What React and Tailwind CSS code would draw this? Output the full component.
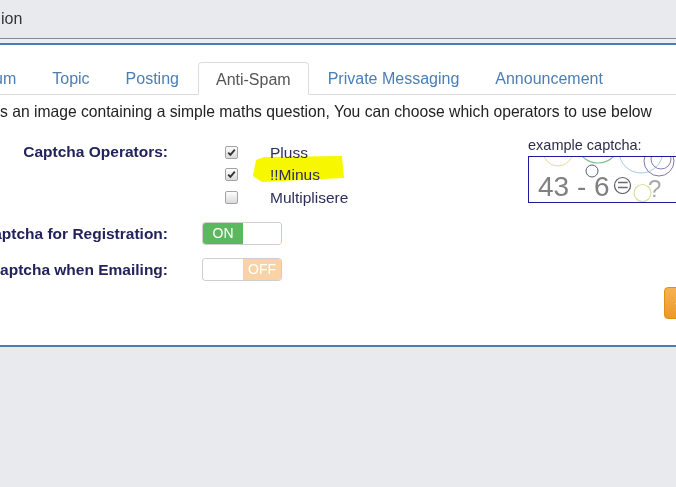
import React from 'react';

const tabs = ['Forum', 'Topic', 'Posting', 'Anti-Spam', 'Private Messaging', 'Announcement'];

function Box({ checked }) {
  return (
    <span className="w-[13px] h-[13px] rounded-[2px] border border-[#a3a3a3] bg-gradient-to-b from-[#fdfdfd] to-[#dadada] flex items-center justify-center">
      {checked && (
        <svg width="9" height="9" viewBox="0 0 9 9">
          <path d="M1.2 4.6 L3.4 6.9 L7.8 1.6" fill="none" stroke="#333" strokeWidth="1.8" />
        </svg>
      )}
    </span>
  );
}

function Toggle({ on }) {
  return (
    <div className="w-[80px] h-[23px] rounded-[4px] border border-[#cfcfcf] border-r-[#f1c48c] flex overflow-hidden text-[14px] text-white">
      {on ? (
        <>
          <div className="w-[40px] bg-[#5cb85c] flex items-center justify-center">ON</div>
          <div className="flex-1 bg-white" />
        </>
      ) : (
        <>
          <div className="w-[40px] bg-white" />
          <div className="flex-1 bg-[#f9d3a4] flex items-center justify-center">OFF</div>
        </>
      )}
    </div>
  );
}

function Captcha() {
  return (
    <div className="relative w-[160px] h-[47px] border border-[#1d1d9c] bg-white overflow-hidden">
      <svg className="absolute left-0 top-0" width="160" height="47" viewBox="0 0 160 47">
        <circle cx="29" cy="-6" r="15" fill="none" stroke="#e6dc9c" strokeWidth="1" />
        <circle cx="69" cy="-16" r="22" fill="none" stroke="#7cc08c" strokeWidth="1.2" />
        <circle cx="112" cy="-6" r="22" fill="none" stroke="#a9c9e2" strokeWidth="1" />
        <circle cx="130" cy="4" r="15" fill="none" stroke="#8474b4" strokeWidth="1" />
        <circle cx="132" cy="2" r="10" fill="none" stroke="#8878b8" strokeWidth="1" />
        <circle cx="63" cy="14" r="6" fill="none" stroke="#55607a" strokeWidth="1" />
        <text x="9" y="39" fontSize="28" fill="#808080" fontFamily="Liberation Sans, Arial, sans-serif">43 - 6</text>
        <text x="88" y="35" fontSize="20" fill="#6b6b6b" fontFamily="Liberation Sans, Arial, sans-serif">=</text>
        <circle cx="93.5" cy="28.5" r="8" fill="none" stroke="#5a5a6a" strokeWidth="1.2" />
        <text x="119" y="40" fontSize="24" fill="#a8a8a8" fontFamily="Liberation Sans, Arial, sans-serif">?</text>
        <circle cx="113.5" cy="36" r="8.5" fill="none" stroke="#d2e296" strokeWidth="1.2" />
      </svg>
    </div>
  );
}

export default function App() {
  return (
    <div className="relative w-[676px] h-[487px] overflow-hidden bg-[#e9eaee] font-[family-name:'Liberation_Sans',Arial,sans-serif]">
      <div className="h-[39px] flex items-center border-b border-[#7a8ca2] text-[16px] text-[#333]">
        <span className="pl-[1px]">ion</span>
      </div>
      <div className="h-[6px] bg-[#eceef1] border-b-2 border-[#4a7cb6]" />

      <div className="h-[302px] bg-white border-b-2 border-[#4a7cb6] pt-[17px]">
        <div className="flex border-b border-[#dddddd] -ml-[47px] whitespace-nowrap">
          {tabs.map(t =>
            t === 'Anti-Spam' ? (
              <div key={t} className="h-[33px] -mb-px px-[17px] pt-[2px] mr-[2px] flex items-center border border-[#dddddd] border-b-white rounded-t-[4px] bg-white text-[16px] text-[#555]">{t}</div>
            ) : (
              <div key={t} className="h-[32px] px-[17px] pt-[2px] mr-[2px] flex items-center text-[16px] text-[#4b7eb5]">{t}</div>
            )
          )}
        </div>

        <div className="mt-[7px] h-[20px] flex items-center whitespace-nowrap text-[15.66px] text-[#222]">
          s an image containing a simple maths question, You can choose which operators to use below
        </div>

        <div className="mt-[13px] flex">
          <div className="w-[528px] shrink-0 pt-[6px]">
            <div className="flex">
              <div className="w-[168px] h-[22px] flex items-center justify-end whitespace-nowrap font-bold text-[15.5px] text-[#23235c]">Captcha Operators:</div>
              <div className="ml-[57px] text-[15.5px] text-[#2e2e5c]">
                {[['Pluss', true], ['!!Minus', true], ['Multiplisere', false]].map(([l, c]) => (
                  <div key={l} className="h-[22.5px] flex items-center">
                    <Box checked={c} />
                    <span className="ml-[32px] relative z-10">{l}</span>
                  </div>
                ))}
              </div>
            </div>

            <div className="mt-[13.5px] flex items-center">
              <div className="w-[168px] flex justify-end whitespace-nowrap font-bold text-[15.5px] text-[#23235c]">Use Captcha for Registration:</div>
              <div className="ml-[34px]"><Toggle on /></div>
            </div>

            <div className="mt-[13px] flex items-center">
              <div className="w-[168px] flex justify-end whitespace-nowrap font-bold text-[15.5px] text-[#23235c]">Use Captcha when Emailing:</div>
              <div className="ml-[34px]"><Toggle on={false} /></div>
            </div>
          </div>

          <div className="flex flex-col shrink-0">
            <div className="mt-[2px] h-[18px] flex items-center whitespace-nowrap text-[14.5px] text-[#2d2d4a]">example captcha:</div>
            <div className="mt-[1px]"><Captcha /></div>
          </div>
        </div>

        <div className="mt-[5px] flex justify-end -mr-[30px]">
          <div className="w-[42px] h-[32px] shrink-0 rounded-[4px] border border-[#e2900f] bg-gradient-to-b from-[#f5b24f] to-[#ee9826] flex items-center pl-[9px]">
            <svg width="12" height="12" viewBox="0 0 12 12"><path d="M2 6 L5 9 L10 3" fill="none" stroke="#fff" strokeWidth="2" /></svg>
          </div>
        </div>
      </div>

      <svg className="absolute left-0 top-0 pointer-events-none mix-blend-multiply" width="676" height="487">
        <polygon points="256,160 264,157 342,156 344,178 262,182 253,176" fill="#f7f700" />
      </svg>
    </div>
  );
}
